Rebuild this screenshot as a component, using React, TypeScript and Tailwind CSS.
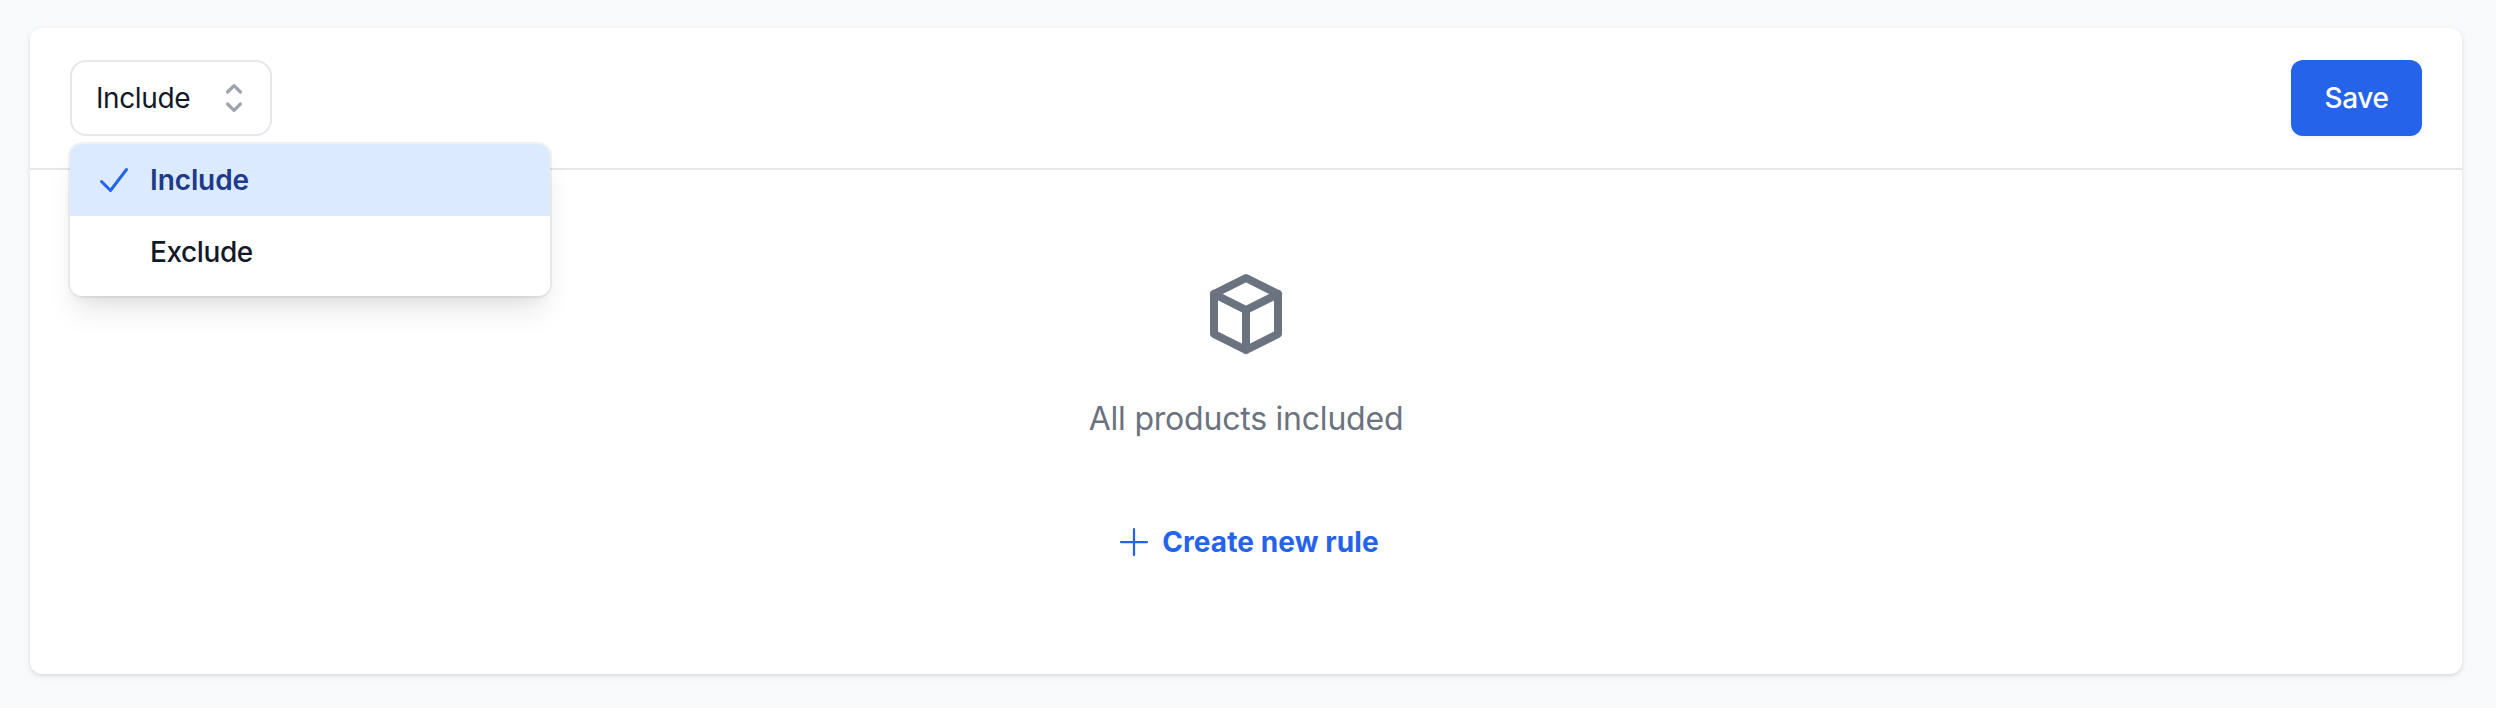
const options = [
  { name: "Include", selected: true },
  { name: "Exclude", selected: false },
];

function SelectorIcon() {
  return (
    <svg
      className="h-10 w-10 text-[#9ca3af]"
      viewBox="0 0 20 20"
      fill="none"
      stroke="currentColor"
      strokeWidth={1.6}
      strokeLinecap="round"
      strokeLinejoin="round"
    >
      <path d="M6.8 7L10 3.8 13.2 7M13.2 13L10 16.2 6.8 13" />
    </svg>
  );
}

function CheckIcon() {
  return (
    <svg
      className="h-8 w-8 text-[#2563eb]"
      viewBox="0 0 32 32"
      fill="none"
      stroke="currentColor"
      strokeWidth={3}
      strokeLinecap="round"
      strokeLinejoin="round"
    >
      <path d="M3.5 17.5l9 9L28.5 5.5" />
    </svg>
  );
}

function CubeIcon() {
  return (
    <svg
      className="h-24 w-24 text-[#6b7280]"
      viewBox="0 0 24 24"
      fill="none"
      stroke="currentColor"
      strokeWidth={2}
      strokeLinecap="round"
      strokeLinejoin="round"
    >
      <path d="M20 7l-8-4-8 4m16 0l-8 4m8-4v10l-8 4m0-10L4 7m8 4v10M4 7v10l8 4" />
    </svg>
  );
}

function PlusIcon() {
  return (
    <svg
      className="h-8 w-8"
      viewBox="0 0 32 32"
      fill="none"
      stroke="currentColor"
      strokeWidth={2.25}
      strokeLinecap="round"
    >
      <path d="M16 3v26M3 16h26" />
    </svg>
  );
}

function RuleTypeSelect() {
  return (
    <div className="relative">
      <button className="flex h-[76px] w-[202px] items-center justify-between rounded-2xl border-2 border-[#e5e7eb] bg-white pr-4 pl-6 text-[28px] tracking-[-0.4px] text-[#111827]">
        Include
        <SelectorIcon />
      </button>
      <ul className="absolute top-[84px] left-0 z-10 w-[480px] overflow-hidden rounded-xl bg-white pb-2 shadow-[0_0_0_2px_rgba(0,0,0,0.05),0_20px_30px_-6px_rgba(0,0,0,0.1),0_8px_12px_-4px_rgba(0,0,0,0.05)]">
        {options.map((option) => (
          <li
            key={option.name}
            className={
              option.selected
                ? "flex h-[72px] items-center bg-[#dbeafe] pl-7 text-[28px] font-semibold tracking-[-0.1px] text-[#1e3a8a]"
                : "flex h-[72px] items-center pl-7 text-[28px] font-medium tracking-[-0.4px] text-[#111827]"
            }
          >
            <span className="mr-5 h-8 w-8">{option.selected && <CheckIcon />}</span>
            {option.name}
          </li>
        ))}
      </ul>
    </div>
  );
}

export default function App() {
  return (
    <main className="h-[708px] bg-[#f9fafb] pt-7 pr-[34px] pl-[30px] font-['Inter',sans-serif]">
      <section className="h-[646px] rounded-xl bg-white shadow-[0_2px_6px_0_rgba(0,0,0,0.1),0_2px_4px_-2px_rgba(0,0,0,0.1)]">
        <header className="flex h-[142px] items-center justify-between border-b-2 border-[#e5e7eb] px-10">
          <RuleTypeSelect />
          <button className="h-[76px] w-[131px] rounded-xl bg-[#2563eb] text-[28px] font-medium tracking-[-0.4px] text-white shadow-[0_2px_4px_rgba(0,0,0,0.05)]">
            Save
          </button>
        </header>
        <div className="flex flex-col items-center pt-24">
          <CubeIcon />
          <p className="mt-[33px] text-[32px] leading-[48px] tracking-[-0.22px] text-[#6b7280]">
            All products included
          </p>
          <button className="mt-[79px] flex items-center gap-3 pl-[5px] text-[28px] leading-10 font-bold tracking-[0.1px] text-[#2563eb]">
            <PlusIcon />
            Create new rule
          </button>
        </div>
      </section>
    </main>
  );
}
